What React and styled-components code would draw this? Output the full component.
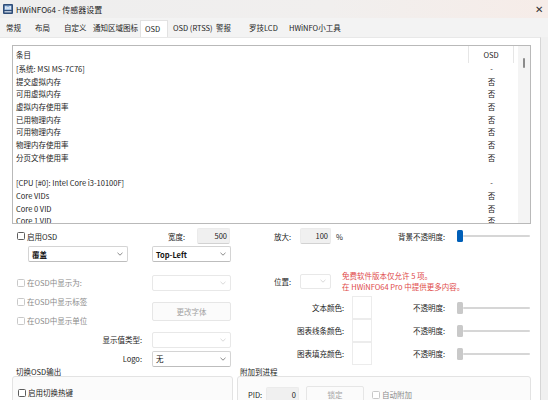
import React from "react";
import styled, { createGlobalStyle } from "styled-components";

const FONT = `"Noto Sans CJK SC", "Noto Sans", sans-serif`;

const GlobalStyle = createGlobalStyle`
  html, body { margin: 0; padding: 0; background: #f0f0f0; }
  body { font-family: ${FONT}; font-size: 7.5px; color: #1b1b1b; }
  * { box-sizing: border-box; }
`;

const Window = styled.div`
  width: 548px;
  height: 400px;
  overflow: hidden;
  display: flex;
  flex-direction: column;
  background: #f3f3f3;
`;

const TitleBar = styled.div`
  height: 18px;
  flex: none;
  display: flex;
  align-items: center;
  gap: 3px;
  padding: 0 5px 0 3px;
  background: linear-gradient(90deg, #eeeeee 0%, #f1efee 60%, #f6ece8 100%);
  font-size: 8px;
`;

const Title = styled.span`
  flex: 1;
  color: #1a1a1a;
`;

const Close = styled.span`
  font-size: 10px;
  color: #333;
  line-height: 10px;
`;

const TabStrip = styled.div`
  height: 19px;
  flex: none;
  display: flex;
  align-items: flex-end;
  padding-left: 1px;
`;

const Tab = styled.div`
  width: ${p => p.$w}px;
  height: 17px;
  padding-left: 5px;
  line-height: 16px;
  white-space: nowrap;
  color: #1b1b1b;
  ${p => p.$active && `
    background: #fff;
    border: 1px solid #e2e2e2;
    border-bottom: none;
    padding-left: 4px;
    line-height: 15px;
  `}
`;

const Body = styled.div`
  flex: 1;
  display: flex;
  min-height: 0;
`;

const Panel = styled.div`
  width: 541px;
  flex: none;
  background: #fff;
  border-right: 1px solid #d6d6d6;
  border-top: 1px solid #e8e8e8;
  padding: 7px 0 0 12px;
  display: flex;
  flex-direction: column;
`;

const ListBox = styled.div`
  width: 519px;
  height: 179px;
  flex: none;
  border: 1px solid #b9b9b9;
  display: flex;
  overflow: hidden;
`;

const Table = styled.div`
  flex: 1;
  overflow: hidden;
`;

const Row = styled.div`
  display: grid;
  grid-template-columns: 456px 45px 1fr;
  height: ${p => (p.$header ? 17 : 12.7)}px;
  line-height: ${p => (p.$header ? 17 : 12.7)}px;
  white-space: nowrap;
`;

const NameCell = styled.div`
  padding-left: 3px;
  ${p => p.$header && `border-right: 1px solid #e6e6e6;`}
`;

const OsdCell = styled.div`
  text-align: center;
  ${p => p.$header && `border-right: 1px solid #e6e6e6;`}
`;

const Scroll = styled.div`
  width: 12px;
  flex: none;
  background: #f4f4f4;
  padding-top: 12px;
`;

const ScrollThumb = styled.div`
  width: 2px;
  height: 10px;
  margin: 0 auto;
  background: #8b8b8b;
  border-radius: 1px;
`;

const Gutter = styled.div`
  flex: 1;
  background: #f0f0f0;
`;

const TopRow = styled.div`
  display: flex;
  align-items: center;
  height: 17px;
  margin-top: 4px;
`;

const Cell = styled.div`
  width: ${p => p.$w}px;
  flex: none;
  text-align: ${p => p.$align || "left"};
  padding-left: ${p => p.$pl || 0}px;
  padding-right: ${p => p.$pr || 0}px;
  white-space: nowrap;
  color: ${p => p.$color || "#1b1b1b"};
`;

const CheckItem = styled.div`
  display: flex;
  align-items: center;
  gap: 2px;
  padding-left: 5px;
  white-space: nowrap;
  color: ${p => (p.$disabled ? "#8a8a8a" : "#1b1b1b")};
`;

const Box = styled.span`
  width: 8px;
  height: 8px;
  flex: none;
  background: #fff;
  border: 1px solid ${p => (p.$disabled ? "#c8c8c8" : "#5c5c5c")};
  border-radius: 1.5px;
`;

const Edit = styled.div`
  width: ${p => p.$w}px;
  height: 16px;
  flex: none;
  background: #f0f0f0;
  border: 1px solid #ebebeb;
  border-bottom-color: #d2d2d2;
  border-radius: 2px;
  text-align: right;
  padding-right: 2px;
  line-height: 14px;
`;

const SelectBox = styled.div`
  width: ${p => p.$w}px;
  height: ${p => p.$h || 16}px;
  flex: none;
  display: flex;
  align-items: center;
  justify-content: space-between;
  padding: 0 4px 0 3px;
  background: #fff;
  border: 1px solid ${p => (p.$disabled ? "#e8e8e8" : "#d4d4d4")};
  border-bottom-color: ${p => (p.$disabled ? "#e8e8e8" : "#bdbdbd")};
  border-radius: 2px;
  font-weight: ${p => (p.$bold ? 600 : 400)};
  color: #111;
  white-space: nowrap;
`;

const Button = styled.div`
  width: ${p => p.$w}px;
  height: ${p => p.$h}px;
  flex: none;
  display: flex;
  align-items: center;
  justify-content: center;
  background: #fbfbfb;
  border: 1px solid #e6e6e6;
  border-radius: 2px;
  color: #a3a3a3;
`;

const SliderWrap = styled.div`
  width: 73px;
  flex: none;
  display: flex;
  align-items: center;
`;

const Thumb = styled.span`
  width: 6px;
  height: 12px;
  flex: none;
  border-radius: 1.5px;
  background: ${p => (p.$active ? "#005fb8" : "#c9c9c9")};
`;

const Track = styled.span`
  flex: 1;
  height: 2px;
  background: #d6d6d6;
  border-radius: 1px;
`;

const Columns = styled.div`
  display: flex;
`;

const LeftCol = styled.div`
  width: 223px;
  flex: none;
  display: flex;
  flex-direction: column;
`;

const RightCol = styled.div`
  flex: 1;
  display: flex;
  flex-direction: column;
`;

const SelectRow = styled.div`
  display: flex;
  margin-top: 2px;
  height: 16px;
`;

const Gap = styled.div`
  width: ${p => p.$w}px;
  flex: none;
`;

const FormGrid = styled.div`
  display: grid;
  grid-template-columns: 140px 79px;
  grid-auto-rows: 19px;
  align-items: center;
  margin-top: 11px;
`;

const GridLabel = styled.div`
  text-align: right;
  padding-right: 10px;
  color: #1b1b1b;
`;

const FontButtonSlot = styled.div`
  grid-column: 2;
  grid-row: 2 / span 2;
`;

const PosRow = styled.div`
  display: flex;
  align-items: center;
  height: 22px;
  margin-top: 26px;
  padding-left: 39px;
`;

const Notice = styled.div`
  margin-left: 11px;
  color: #e04a4a;
  line-height: 11px;
  white-space: nowrap;
`;

const ColorGrid = styled.div`
  display: grid;
  grid-template-columns: 117px 20px 85px 73px;
  grid-auto-rows: 23px;
  align-items: center;
  margin-top: 4px;
`;

const RightLabel = styled.div`
  text-align: right;
  padding-right: ${p => p.$pr}px;
  white-space: nowrap;
`;

const Swatch = styled.div`
  width: 20px;
  height: 23px;
  background: #fff;
  border: 1px solid #ececec;
`;

const GroupRow = styled.div`
  display: flex;
  gap: 4px;
`;

const Group = styled.div`
  width: ${p => p.$w}px;
  flex: none;
`;

const GroupTitle = styled.div`
  height: 8px;
  line-height: 8px;
  padding-left: ${p => p.$pl}px;
  white-space: nowrap;
`;

const GroupBox = styled.div`
  height: 40px;
  border: 1px solid #e3e3e3;
  border-radius: 3px;
  background: #fbfbfb;
  padding-top: 10px;
`;

const PidRow = styled.div`
  display: flex;
  align-items: center;
  height: 17px;
  margin-top: -1px;
`;

const Chevron = ({ color = "#6b6b6b" }) => (
  <svg width="6" height="4" viewBox="0 0 6 4">
    <path d="M0.5 0.8 L3 3.2 L5.5 0.8" fill="none" stroke={color} strokeWidth="0.8" />
  </svg>
);

const AppIcon = () => (
  <svg width="10" height="10" viewBox="0 0 10 10">
    <rect x="0" y="0" width="10" height="10" rx="1" fill="#2f4d78" />
    <rect x="1.5" y="1.5" width="7" height="4.5" fill="#8fb3dc" />
    <rect x="2.3" y="2.3" width="1.2" height="3" fill="#fff" />
    <rect x="4.4" y="3" width="1.2" height="2.3" fill="#fff" />
    <rect x="6.5" y="2" width="1.2" height="3.3" fill="#fff" />
    <rect x="1.5" y="7.2" width="7" height="1.2" fill="#d9e3ef" />
  </svg>
);

const Check = ({ label, disabled }) => (
  <CheckItem $disabled={disabled}>
    <Box $disabled={disabled} />
    <span>{label}</span>
  </CheckItem>
);

const Select = ({ value, w, h, disabled, bold }) => (
  <SelectBox $w={w} $h={h} $disabled={disabled} $bold={bold}>
    <span>{value}</span>
    <Chevron color={disabled ? "#cfcfcf" : "#6b6b6b"} />
  </SelectBox>
);

const Slider = ({ active }) => (
  <SliderWrap>
    <Thumb $active={active} />
    <Track />
  </SliderWrap>
);

const tabs = [
  ["常规", 29],
  ["布局", 29],
  ["自定义", 29],
  ["通知区域图标", 52],
  ["OSD", 28, true],
  ["OSD (RTSS)", 43],
  ["警报", 33],
  ["罗技LCD", 40],
  ["HWiNFO小工具", 61],
];

const rows = [
  ["[系统: MSI MS-7C76]", "-"],
  ["提交虚拟内存", "否"],
  ["可用虚拟内存", "否"],
  ["虚拟内存使用率", "否"],
  ["已用物理内存", "否"],
  ["可用物理内存", "否"],
  ["物理内存使用率", "否"],
  ["分页文件使用率", "否"],
  ["", ""],
  ["[CPU [#0]: Intel Core i3-10100F]", "-"],
  ["Core VIDs", "否"],
  ["Core 0 VID", "否"],
  ["Core 1 VID", "否"],
];

const colorRows = ["文本颜色:", "图表线条颜色:", "图表填充颜色:"];

export default function App() {
  return (
    <>
      <GlobalStyle />
      <Window>
        <TitleBar>
          <AppIcon />
          <Title>HWiNFO64 - 传感器设置</Title>
          <Close>✕</Close>
        </TitleBar>
        <TabStrip>
          {tabs.map(([name, w, active]) => (
            <Tab key={name} $w={w} $active={active}>
              {name}
            </Tab>
          ))}
        </TabStrip>
        <Body>
          <Panel>
            <ListBox>
              <Table>
                <Row $header>
                  <NameCell $header>条目</NameCell>
                  <OsdCell $header>OSD</OsdCell>
                </Row>
                {rows.map(([name, osd], i) => (
                  <Row key={i}>
                    <NameCell>{name}</NameCell>
                    <OsdCell>{osd}</OsdCell>
                  </Row>
                ))}
              </Table>
              <Scroll>
                <ScrollThumb />
              </Scroll>
            </ListBox>

            <TopRow>
              <Cell $w={140}>
                <Check label="启用OSD" />
              </Cell>
              <Cell $w={45} $align="right" $pr={12}>宽度:</Cell>
              <Edit $w={33}>500</Edit>
              <Cell $w={70} $align="right" $pr={9}>放大:</Cell>
              <Edit $w={31}>100</Edit>
              <Cell $w={66} $pl={5}>%</Cell>
              <Cell $w={60} $align="right" $pr={12}>背景不透明度:</Cell>
              <Slider active />
            </TopRow>

            <Columns>
              <LeftCol>
                <SelectRow>
                  <Gap $w={16} />
                  <Select value="覆盖" w={100} bold />
                  <Gap $w={24} />
                  <Select value="Top-Left" w={79} bold />
                </SelectRow>
                <FormGrid>
                  <Check label="在OSD中显示为:" disabled />
                  <Select value="" w={79} disabled />
                  <Check label="在OSD中显示标签" disabled />
                  <FontButtonSlot>
                    <Button $w={79} $h={19}>更改字体</Button>
                  </FontButtonSlot>
                  <Check label="在OSD中显示单位" disabled />
                  <GridLabel>显示值类型:</GridLabel>
                  <Select value="" w={79} disabled />
                  <GridLabel>Logo:</GridLabel>
                  <Select value="无" w={79} />
                </FormGrid>
              </LeftCol>

              <RightCol>
                <PosRow>
                  <Cell $w={26}>位置:</Cell>
                  <Select value="" w={31} h={15} disabled />
                  <Notice>
                    免费软件版本仅允许 5 项。
                    <br />
                    在 HWiNFO64 Pro 中提供更多内容。
                  </Notice>
                </PosRow>
                <ColorGrid>
                  {colorRows.map(label => (
                    <React.Fragment key={label}>
                      <RightLabel $pr={8}>{label}</RightLabel>
                      <Swatch />
                      <RightLabel $pr={12}>不透明度:</RightLabel>
                      <Slider />
                    </React.Fragment>
                  ))}
                </ColorGrid>
              </RightCol>
            </Columns>

            <GroupRow>
              <Group $w={221}>
                <GroupTitle $pl={4}>切换OSD输出</GroupTitle>
                <GroupBox>
                  <Check label="启用切换热键" />
                </GroupBox>
              </Group>
              <Group $w={294}>
                <GroupTitle $pl={3}>附加到进程</GroupTitle>
                <GroupBox>
                  <PidRow>
                    <Cell $w={28} $pl={10}>PID:</Cell>
                    <Edit $w={33}>0</Edit>
                    <Gap $w={7} />
                    <Button $w={58} $h={17}>锁定</Button>
                    <Gap $w={3} />
                    <Check label="自动附加" disabled />
                  </PidRow>
                </GroupBox>
              </Group>
            </GroupRow>
          </Panel>
          <Gutter />
        </Body>
      </Window>
    </>
  );
}
